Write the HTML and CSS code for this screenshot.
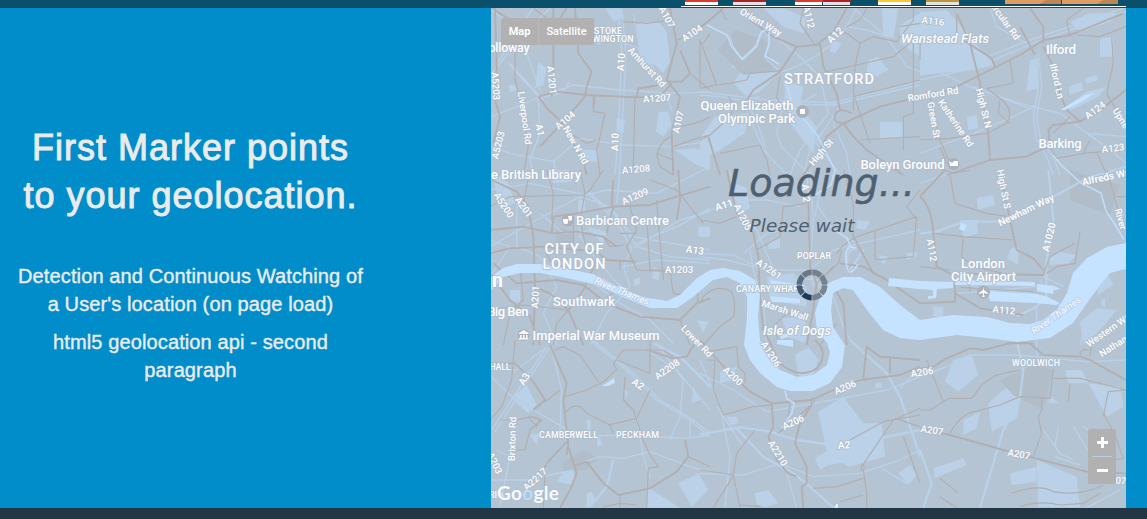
FILE: index.html
```html
<!DOCTYPE html>
<html lang="en">
<head>
<meta charset="utf-8">
<title>Geolocation</title>
<link rel="stylesheet" href="styles.css">
</head>
<body>
<header class="topbar">
  <div class="strip">
    <svg width="445" height="8" viewBox="681 0 445 8">
      <path fill="#db3a2c" d="M685 0h33v2h-33zM795 0h28v2h-28z"/>
      <path fill="#aa2023" d="M733 0h33v2h-33zM823 0h28v2h-28z"/>
      <path fill="#fff" d="M685 2h33v3h-33zM795 2h27v3h-27zM878 2h33v3h-33z"/>
      <path fill="#e1e3e6" d="M733 2h33v3h-33zM823 2h27v3h-27zM926 2h33v3h-33z"/>
      <path fill="#ffc72f" d="M878 0h33v2h-33z"/>
      <path fill="#b99739" d="M926 0h33v2h-33z"/>
      <path fill="#e49b62" d="M1005 0h56v4h-56zM1062 0h56v4h-56z"/>
      <path fill="#c18554" d="M1046 0h15v4h-21zM1103 0h15v4h-21z"/>
      <path fill="#fff" d="M681 6h445v1H681z"/>
    </svg>
  </div>
</header>
<main class="stage">
  <section class="intro">
    <h2 class="intro-title">First Marker points<br>to your geolocation.</h2>
    <p class="intro-text">Detection and Continuous Watching of<br>a User's location (on page load)</p>
    <p class="intro-text">html5 geolocation api - second<br>paragraph</p>
  </section>
  <section class="map">
    <svg class="map-canvas" width="635" height="500" viewBox="491 8 635 500">
      <!-- parks and open ground -->
      <g class="park">
        <g transform="translate(490 0) scale(.33333)">
          <path d="M345 25h45l12 25-30 15zM440 65l65 0 25 30 10 90-20 35-25-25-45-10zM300 120l35 0-5 15zM505 335l30 0 10 40-25 35-22-15zM555 450l60-5 45 15v50l-40-15zM145 185l25 20-10 50-25 10zM275 450h50v35h-40zM380 355l25 5-5 40-20-5zM55 255l20 0 5 15-20 8z"/>
        </g>
        <g transform="translate(700 0) scale(.33333)">
          <path d="M120 220l60 0 60-5-60 60-40 15-40-40zM45 350l100-10-10 60-90 60-45 15 0-60zM545 25h50l-15 90-30-10zM600 75l60-35v130l-60-40zM505 180l30-10 30 40-35 20-30-15zM540 365l70 0v50l-70 5zM190 25l60 0 70 30-10 45-60-20zM395 120l30 10-20 30-15-5zM250 240l60 20-10 60 50 60-10 80-70-90zM100 175l15 0 20 20-40 10z"/>
        </g>
        <g transform="translate(920 0) scale(.33333)">
          <path d="M0 35l80-5 80 90 60 75-60 15-160 15zM540 115l40-5v60h-40zM445 260l40-15 5 25-40 15zM495 235l35-10 5 15-35 12zM440 320l60-45 60-15-25 30-80 40zM140 350l30-5 5 40-30 5zM330 180l25-5v90l-35 10zM450 65l60-25 80 0-20 25-90 30z"/>
        </g>
        <g transform="translate(490 170) scale(.33333)">
          <path d="M5 0l50 40 20 60-45 15zM180 0l10 40 55-5-10-35zM265 90h20v40h-20zM625 170h35v30h-35zM490 290l20 10-5 30-20-5zM60 360h30v35h-30zM430 330l20-10v20l-15 10zM290 170l60 15-10 40zM620 450l35 5-15 35z"/>
        </g>
        <g transform="translate(700 170) scale(.33333)">
          <path d="M90 35l50 20 10 60-40 20zM205 220l35-15v30l-35 2zM200 320l80-10 40 40 0 60-110-20zM470 150l40 5-15 25-25-5zM245 445l60-5 20 30-10 50-50-20zM535 255l30 5-15 25zM620 250l30-5v15l-30 10z"/>
        </g>
        <g transform="translate(920 170) scale(.33333)">
          <path d="M120 150l50 0 5 40-45 15zM170 85l50-10 5 30-50 15zM385 265l35-20 50 10-25 25-55 5zM275 235h20v50l-35-20zM40 410h30v30h-30zM530 350l35-35 15 30-45 30zM555 385a10 10 0 1 0 1 25zM480 455l50-40 60 5-50 60-50 45z"/>
        </g>
        <g transform="translate(490 340) scale(.33333)">
          <path d="M75 165l35-30 30 60-25 25-35-30zM220 395l35-20-5 60-50-10zM290 460l15-5 15 30-30 20zM565 430l60-30 30 50-50 50zM470 440l100 63H470zM120 285l30-5-10 35zM400 150l15 5-5 20zM320 295l12 0 3 20-12 5zM610 140l20 40-25 10zM290 240l12 0v35l-10 0z"/>
        </g>
        <g transform="translate(700 340) scale(.33333)">
          <path d="M355 215l75-45 60 80 55 0 10 100-110 30-65-45zM345 355l50-30 40 10 10 30-60 10-25 15zM165 460l40-10 30 40-40 12-25-10zM80 230l30 0 5 20-25 5zM595 400l35-25 20 30-25 30zM285 45l40-25 30 40-20 55-40-10zM525 130l20-2v15l-18 2zM60 95l50-15-10 40-40 10z"/>
        </g>
        <g transform="translate(920 340) scale(.33333)">
          <path d="M100 60l55-15 20 60-60 50-40-30zM205 190l70-60 35 5-20 100-75 40zM130 240l50-25-10 50-40 20zM40 385l90-30 10 20-95 40zM350 360l120 50 10 92H355zM270 400l80-20 0 45-75 10zM435 90l50 0 20 40-60 0zM390 165l25 25-30 0zM505 130l95 10 10 60-50 30z"/>
        </g>
      </g>
      <!-- built-up patches -->
      <path class="patch" d="M735 30l30 10 8 30-30 5-25-25zM563 462l20-12 15 8-12 12-22 2zM556 228l18 3-3 18-15-4zM1000 380l35-15 18 5-10 40-30-15zM1070 170l50 15-10 30-40-15zM491 75l10 0v14h-10z"/>
      <!-- secondary light roads and railways -->
      <g class="light">
        <g transform="translate(490 0) scale(.33333)">
          <path d="M5 350L140 295 250 255 390 270 560 280 660 275M55 190L145 290 150 400 120 480 130 525M385 25L395 160 385 400 375 525M395 25L408 160 395 400 388 525M5 220L110 90 180 25M145 290Q230 290 235 245M5 440L60 460 190 485 270 415 400 435 540 440 660 425M400 130L450 145 520 250 545 330M60 190L160 300M110 160L150 270M20 190L100 80M190 480L200 525M450 145L430 40M560 450L620 490 660 480"/>
          <path d="M0 25L80 90 130 25"/>
        </g>
        <g transform="translate(700 0) scale(.33333)">
          <path d="M0 285L60 290 180 310 400 315 660 255M0 275L200 300 400 308 660 245M20 75L90 110 100 140 130 180 170 140 190 90 210 70M110 25L200 90 300 170 360 230 385 340 300 450 270 525M230 220Q370 180 440 80L470 25M460 25L560 110 620 200 660 215M150 350L190 450 260 525M420 320L330 450 310 525M400 370L440 460 450 525M180 290L140 300 180 390 200 460M270 330L350 430 420 525M265 250L230 400 245 440 330 525M440 80L500 90 560 110M350 280L270 330 290 380"/>
          <path d="M190 90L210 120 195 175 240 215"/>
        </g>
        <g transform="translate(920 0) scale(.33333)">
          <path d="M0 240L160 205 340 130 450 90 618 35M0 225L140 195 330 120 450 80 610 25M0 190L150 260 300 310 420 340 500 400 618 410M345 160L355 260 340 350 350 420 380 470 400 525M355 160L365 260 350 350 362 420 400 470 420 525M0 460L160 400 280 350 350 315M210 25L230 80 320 130M160 260L340 330M500 400L560 440 618 490"/>
        </g>
        <g transform="translate(490 170) scale(.33333)">
          <path d="M0 60L120 40 290 75 350 60 500 70 660 -10M0 230L140 150 270 80 360 110 430 200 660 240M290 60L390 150 440 230 540 260 660 270M290 65L380 155 425 235 400 290 420 350 350 430 300 525M430 225L560 170 660 115M430 235L570 150 660 125M80 100L80 230 150 260 200 350 160 430 200 525M0 210L60 230 0 320M380 100L390 0M400 290L500 270 660 280M150 130L220 190 330 180M550 520L480 450 390 400 310 340M270 80L270 200 330 280 400 360"/>
        </g>
        <g transform="translate(700 170) scale(.33333)">
          <path d="M0 250L100 255 160 285 250 300 330 300 400 240 480 220 660 180M0 260L80 270 160 290 260 320 350 330 400 380 430 470 460 525M320 0L330 150 325 270 340 350M330 0L340 150 332 270M0 130L130 90 200 90 300 110M90 0L110 120 170 180 230 320M150 240L160 300 190 400 200 525M350 100L400 180 470 220M360 60L345 140M130 250L200 190 300 170M320 300L400 400"/>
          <path class="wide" d="M470 235Q430 240 445 290M490 240Q470 270 450 300"/>
        </g>
        <g transform="translate(920 170) scale(.33333)">
          <path class="wide" d="M0 190L50 185 130 155 240 155 340 110 410 75 500 25 618 -10M385 0L400 150 380 270 378 380 350 410 290 440"/>
          <path d="M0 40L60 20 120 0M370 320L430 350M360 330L390 400 420 405M480 455L490 490 480 525M150 350L340 370M110 370L350 350M350 410V500"/>
        </g>
        <g transform="translate(490 340) scale(.33333)">
          <path d="M5 110L70 175 200 250 260 290 400 285 590 295 660 285M5 90L80 90 170 20M5 270L170 20M15 275L180 20M185 25L215 150 210 270M300 0L420 100 500 180 600 240 660 290M310 0L430 100 510 180 610 240 660 280M250 375L330 350 400 355 480 335 600 380 660 395M5 420L110 420 250 390M470 30L560 90 660 210M500 10L580 120 570 230 540 300M600 240V290M440 230L460 350 480 410M30 500L60 350 20 330"/>
          <path class="wide" d="M490 10L570 50 660 140M370 360L350 440 300 500"/>
        </g>
        <g transform="translate(700 340) scale(.33333)">
          <path class="wide" d="M0 283L120 262 210 275 290 300 400 315 540 295 660 270M110 265L190 350 280 400 330 440 400 503M450 0L560 100 600 170 640 290 660 350"/>
          <path d="M0 100L100 150 200 215 340 190 560 150 660 110M0 60L60 200 90 350 75 503M0 400L130 405 240 370 340 410 480 400 600 360 660 330M600 145L660 80M545 385L620 430M260 400L290 503M240 280L340 190M130 320L50 200"/>
        </g>
        <g transform="translate(920 340) scale(.33333)">
          <path class="wide" d="M290 0L310 90 300 170 250 270 220 370 180 503M0 330L35 430 10 503"/>
          <path d="M0 110L80 80 150 45 290 45 400 55 500 65 618 60M370 270L420 340 460 360M415 260L405 320M460 260L510 340M405 350L480 375M520 280L490 260M500 503L600 450M350 0V50"/>
        </g>
      </g>
      <!-- main roads -->
      <g class="road">
        <g transform="translate(490 0) scale(.33333)">
          <path class="major" d="M5 25L110 90 200 70 230 25M145 290L200 275 290 285 440 292 510 290 545 250M145 290L175 330 210 360 280 480 290 525M150 440L220 365 285 290 290 260 305 215 265 160 255 25M540 25L560 130 530 240 545 260 570 290 545 400 550 525M570 150L600 220 575 245 530 245M440 290L445 265 510 255M190 25V250L185 290M15 25L20 200 15 300 30 350 10 430"/>
          <path d="M400 65L470 70 545 60M565 120L660 60M600 220L660 270M75 130L75 240 100 330 115 440 100 525M315 290L310 335 345 340 330 410 320 450 330 525M435 290L430 500M240 400L290 430 320 420M575 380L630 365 660 350M550 440L620 415 660 405M130 25L200 75M500 470Q510 420 545 410M550 480L500 460 510 500 550 525M660 100L640 130M310 335V285"/>
        </g>
        <g transform="translate(700 0) scale(.33333)">
          <path class="major" d="M0 85L70 25M140 300L160 270 240 215 290 140 350 135 400 95 440 25M290 140L220 110 150 60M360 130L370 200 410 280 420 330M660 290L540 320 430 370 380 410 350 470 310 525M430 370L460 410 500 450 610 525M440 370Q395 370 405 345T455 340M25 410L60 525"/>
          <path d="M0 260L0 120 50 255 90 250 140 240 150 220 240 212M0 265L50 255M480 130L465 200 460 280 480 340 510 430M405 95L440 100 480 130 520 110 590 125 640 60 640 25M380 215L470 195 580 170 640 120V250L640 340 610 350V450M460 290L660 240M460 295V330M480 420L660 410M345 135L300 70 310 25M660 70L600 80M85 290L105 320 80 360 30 405M60 460L180 435 200 480 210 525M240 230L230 290 250 330M0 420L30 405M440 80L480 60 500 25M80 60L60 25"/>
        </g>
        <g transform="translate(920 0) scale(.33333)">
          <path class="major" d="M0 300L110 260 180 225 300 165 370 120 450 105 610 40M110 40L150 130 180 250 205 400 210 480M130 120L215 175 225 200M370 140L400 200 420 280 440 330 480 365 540 330 618 270M480 365L400 375 385 390 390 440 350 455 320 470 210 480 80 525M330 25L370 80 370 130M300 80L345 165"/>
          <path d="M0 130L0 180M110 50L110 130M30 290L60 420 90 490M0 420L90 415 200 400 260 370Q285 330 240 295L200 265 280 250 270 180M240 300L235 340 270 370M575 110L580 190 560 280 618 380M470 105L540 110 618 80M450 110L440 60 490 25M390 440L410 475 490 460 510 420M490 460L550 455 618 450M60 440L80 490M450 350L400 400M530 455L560 525"/>
        </g>
        <g transform="translate(490 170) scale(.33333)">
          <path class="major" d="M5 30L80 65 115 110 130 200 135 350 130 525M0 250L60 235 160 230 320 245 350 270 440 275M0 180L100 170 190 190 260 185 340 200 380 230M185 190L190 140 260 130 370 110 480 105 560 80 660 50M370 110L350 190M0 310L60 390 120 440 150 525M130 350L180 370 235 420 280 525M235 420L280 360 320 270M10 280L80 340 200 330 280 345 350 400 450 440 570 450 620 400 660 385M565 0L570 90 560 150M370 30L365 110"/>
          <path d="M0 110L60 80 280 75 300 60 340 0M270 0L285 70 270 150 290 240M120 0L100 100M170 0L190 70 185 150M420 110L440 180 410 230 440 300 540 305M470 140L480 300 540 300M500 90L510 210 520 330M540 305L550 370 600 380M640 160L560 60 480 30M250 130V245M0 420L100 405 235 420 200 460 190 525M160 230L200 310 280 320M90 290L100 390 60 430 40 525M390 190L440 190M620 330L625 400M570 450L600 525M350 380L400 350M390 270V300M340 200L360 230 400 225"/>
        </g>
        <g transform="translate(700 170) scale(.33333)">
          <path class="major" d="M80 0L110 130 160 190 175 260 180 380 190 480 215 525M325 80L330 290 350 340 340 420 320 525M340 300L400 350 430 400 440 525M420 280L490 290 560 330 660 400M460 200L520 310 555 325"/>
          <path d="M0 150L60 160 110 140M170 240L240 200 250 110 320 100M410 250Q430 220 470 200L530 180 650 140M350 340L415 280 425 240M430 0L460 100 460 200M525 180V270L640 260 650 140M660 60L620 110 650 150M0 400L10 380Q50 340 95 365 110 400 100 440L60 470 10 525M360 525L410 460M240 525L220 470 260 430 330 430M180 350L250 345M370 320L400 290"/>
        </g>
        <g transform="translate(920 170) scale(.33333)">
          <path class="major" d="M0 80L75 0M0 80Q35 110 40 190L50 290 90 310 370 315M240 0L270 150 290 240 340 265 370 300M105 330V395L0 400M105 370L180 415 310 435M260 520H340"/>
          <path d="M75 0L100 10 150 0M90 15L105 100 200 130 265 140M280 210L130 200 40 190M130 200L125 260 160 290 250 310M0 290L90 300M480 185L465 280 410 290 380 310M560 0L600 140 618 170M590 80H618M370 315L390 260 465 220M120 352L340 365M150 340V365"/>
        </g>
        <g transform="translate(490 340) scale(.33333)">
          <path class="major" d="M180 15L230 130 220 180 235 320 260 400 240 450 210 503M170 370L235 300 230 345M110 430L170 375M255 375L290 365 340 430 385 465 480 445 560 395 595 350 585 300M470 30L550 55 590 50 620 0M5 70L75 70 130 125 165 180 130 210"/>
          <path d="M75 0L65 120 35 200 0 240M195 30L220 20 270 45 280 60 325 125M225 170L290 150 340 125 380 90 370 70 400 30M380 60L480 100V0M400 30L520 30 550 50M225 220Q260 175 290 220L360 255 370 280M355 255L440 235 480 150M405 110L400 180 430 210 460 300 480 345 505 380 475 385 470 503M165 185L210 150M30 240L80 240 125 230 155 240 120 270 105 330 80 330M390 465V503M440 495L390 490 340 500M595 350L660 380M115 230L140 260 150 235M165 400L160 503"/>
        </g>
        <g transform="translate(700 340) scale(.33333)">
          <path class="major" d="M0 0L80 90 150 155 215 190 335 180 400 150 480 120 600 105 660 80M215 190L220 260 205 290 230 360 265 400 290 410M235 280L335 195 300 250 285 310 320 380 320 430 305 440 310 503M660 60L540 50 500 20 490 115M570 50L570 100M210 10L240 70Q300 120 350 85 390 40 345 0"/>
          <path d="M335 175a8 8 0 1 1-1 16zM485 375a8 8 0 1 1-1 16zM215 195L160 200 70 225 40 150 45 60 20 60M30 35L110 20 115 80 135 100 135 130M450 300L550 245 660 225M485 380L580 240 660 205M490 390L500 460M340 445L410 440 490 415M420 485L490 465M500 460V503M100 405L110 340 165 270M100 405L80 440 40 503M0 390L100 405 120 503M585 235L660 260M120 495L180 500M265 230L270 190M610 290L660 430"/>
        </g>
        <g transform="translate(920 340) scale(.33333)">
          <path class="major" d="M0 85L40 80 80 55 150 25 190 30 290 5 330 10 370 45 480 50 510 60 618 120M0 265L90 285 250 330 500 395 618 400"/>
          <path d="M20 60L70 185 30 210 0 210M70 185L90 175 155 175 190 130 230 105 300 90M90 280Q110 240 145 220L240 195 300 170 390 175 400 85M365 175V210L355 230 365 280 340 350M550 230L565 155 618 150M550 220L585 285 610 355 585 360M400 115L480 115 618 150M480 45Q480 25 505 30M60 415L115 460M60 470L110 503M275 460Q360 430 400 455 480 470 550 435M300 500Q360 480 420 495L490 490 540 460M515 0L510 50M450 130L445 185"/>
        </g>
      </g>
      <!-- River Thames, docks and small water -->
      <g class="water">
        <path d="M491 277L503 268 517 264 540 264 563 268 593 274 620 288 643 297 667 301 680 295 697 278 710 270 723 268 740 271 755 280 760 295 758 317 760 340 767 355 780 370 797 377 813 375 827 365 830 352 827 343 817 330 815 313 820 297 828 283 843 277 860 277 880 287 900 305 920 320 953 315 987 317 1010 323 1030 324 1043 320 1057 310 1067 293 1073 273 1087 258 1107 247 1126 243V269L1110 273 1100 285 1087 303 1073 323 1050 338 1017 342 987 338 957 335 920 340 900 338 883 330 867 310 853 290 843 288 833 293 831 310 833 327 845 345 842 367 830 383 813 391 790 391 777 387 760 373 750 360 744 345 747 317 747 297 740 283 727 277 713 280 693 297 677 308 650 308 623 297 597 285 567 278 540 273 520 273 503 277 497 285 491 290Z"/>
        <path d="M889 278l31 3 33 1v6l-16 1-1 9-8 1v-3h5v-6l-14-1-31-3zM955 280l80 2v4l-80-1zM987 291l50 3 11 3 12 6-4 2-20-2-46-2zM1037 284l17 2 7 3-7 1-1 4-16-3zM770 280l32 5 0 5-30-2zM770 296l30 3v4l-28-1zM777 340h16v7l-16-3zM780 335l15-4v4l-14 4zM602 386l12-8 1 5-7 3zM491 495l8-6 6 8zM961 223l6 2-3 6-5-2zM1060 110l25-15 10-2-12 8-18 9z"/>
        <path class="stream" d="M707 25l20 10 5 12 10 12 14-13 5-14 8-3 0 15-4 12 14 8M787 85l5 20 25 30 18 35-4 15-16 10M1053 155l8 10 20 18 20 10 5 18 10 15 8 14M856 248q-12-5-10 14t12 2M785 390l2 9 7 4-2 10-10 15M835 230l12 8 4 10"/>
      </g>
      <!-- point-of-interest markers -->
      <g class="pin">
        <circle cx="802.500" cy="111.500" r="6.500"/><circle cx="567.500" cy="220.500" r="6"/><circle cx="953.500" cy="164" r="6"/><circle cx="983.500" cy="292" r="6.500"/><circle cx="523.500" cy="335" r="6"/>
      </g>
      <g fill="#f7faff">
        <path d="M800 109h5v5h-5zM563 219h5v4q-3 3-5-1zM568 216h4v4l-3 1zM949 161l3 2 2-2 4 0v5h-8zM983 287l1 3 4 3v1l-4-1v2l1 2h-3l1-2v-2l-4 1v-1l4-3z"/>
        <path d="M519 333l4.500-3 5 3v1h-9.500zM520 335h1.500v3H520zM523 335h1.500v3H523zM526 335h1.500v3H526zM519 338h9v1.500h-9z"/>
      </g>
      <!-- place labels -->
      <g class="place">
        <text x="608" y="34" font-size="8.800" textLength="28">STOKE</text>
        <text x="613" y="42" font-size="8.800" textLength="41">WINGTON</text>
        <text x="509" y="51.500" font-size="12.500" textLength="41">olloway</text>
        <text x="829" y="84" font-size="14.500" textLength="90">STRATFORD</text>
        <text x="747" y="109.500" font-size="13" textLength="93">Queen Elizabeth</text>
        <text x="756.500" y="122.500" font-size="13" textLength="77">Olympic Park</text>
        <text x="902.500" y="168.500" font-size="13" textLength="84">Boleyn Ground</text>
        <text x="945" y="42.500" font-size="13" font-style="italic" textLength="88">Wanstead Flats</text>
        <text x="1061" y="54" font-size="13.500" textLength="30">Ilford</text>
        <text x="1060" y="148" font-size="13" textLength="43">Barking</text>
        <text x="536" y="179" font-size="13" textLength="90">e British Library</text>
        <text x="622.500" y="225" font-size="13" textLength="93">Barbican Centre</text>
        <text x="574" y="254" font-size="14.500" textLength="59">CITY OF</text>
        <text x="574" y="269" font-size="14.500" textLength="63">LONDON</text>
        <text x="497.500" y="287" font-size="19.500" style="font-weight:700">n</text>
        <text x="584" y="305.500" font-size="13" textLength="62">Southwark</text>
        <text x="508" y="316" font-size="13" textLength="41">Big Ben</text>
        <text x="596" y="340" font-size="13" textLength="127">Imperial War Museum</text>
        <text x="814" y="259" font-size="8.800" textLength="34">POPLAR</text>
        <text x="770" y="292" font-size="8.800" textLength="68">CANARY WHARF</text>
        <text x="797" y="335" font-size="13" font-style="italic" textLength="68">Isle of Dogs</text>
        <text x="983" y="267.500" font-size="13" textLength="44">London</text>
        <text x="983.500" y="281" font-size="13" textLength="65">City Airport</text>
        <text x="500" y="370" font-size="8.800" textLength="21">HALL</text>
        <text x="568.500" y="438" font-size="8.800" textLength="59">CAMBERWELL</text>
        <text x="637.500" y="438" font-size="8.800" textLength="43">PECKHAM</text>
        <text x="1036" y="366" font-size="8.800" textLength="48">WOOLWICH</text>
        <text x="493" y="498" font-size="8.800">RI</text>
      </g>
      <!-- road labels, rotated along their roads -->
      <g class="name">
        <text transform="translate(667 17) rotate(62)">A107</text>
        <text transform="translate(692 33) rotate(-33)">A104</text>
        <text transform="translate(621 62) rotate(-86)" class="b">A10</text>
        <text transform="translate(647 67) rotate(47)">Amhurst Rd</text>
        <text transform="translate(552 80) rotate(84)">A1201</text>
        <text transform="translate(496 86) rotate(86)">A5203</text>
        <text transform="translate(657 98) rotate(-4)">A1207</text>
        <text transform="translate(525 118) rotate(82)">Liverpool Rd</text>
        <text transform="translate(565 120) rotate(-40)">A104</text>
        <text transform="translate(540 130) rotate(80)" class="b">A1</text>
        <text transform="translate(576 145) rotate(61)">New N Rd</text>
        <text transform="translate(498 145) rotate(-76)">A5203</text>
        <text transform="translate(615 142) rotate(-88)" class="b">A10</text>
        <text transform="translate(678 122) rotate(-78)">A107</text>
        <text transform="translate(636 169) rotate(-5)">A1208</text>
        <text transform="translate(761 22) rotate(30)">Orient Way</text>
        <text transform="translate(809 17) rotate(77)">A112</text>
        <text transform="translate(835 35) rotate(-43)" class="b">A12</text>
        <text transform="translate(821 152) rotate(-50)">High St</text>
        <text transform="translate(933 21) rotate(7)">A116</text>
        <text transform="translate(1006 22) rotate(54)">ircular Rd</text>
        <text transform="translate(1057 81) rotate(77)">Ilford Ln</text>
        <text transform="translate(933 94) rotate(-9)">Romford Rd</text>
        <text transform="translate(984 108) rotate(76)">High St N</text>
        <text transform="translate(934 120) rotate(80)">Green St</text>
        <text transform="translate(956 123) rotate(56)">Katherine Rd</text>
        <text transform="translate(1095 110) rotate(-36)">A124</text>
        <text transform="translate(1121 118) rotate(58)">Upne</text>
        <text transform="translate(1113 148) rotate(-6)">A123</text>
        <text transform="translate(504 205) rotate(57)">A5200</text>
        <text transform="translate(524 207) rotate(55)">A201</text>
        <text transform="translate(635 196) rotate(-24)">A1209</text>
        <text transform="translate(695 250) rotate(8)" class="b">A13</text>
        <text transform="translate(679 269)">A1203</text>
        <text transform="translate(535 297) rotate(-87)">A201</text>
        <text transform="translate(622 291) rotate(22)" class="r">River Thames</text>
        <text transform="translate(724 205) rotate(-17)" class="b">A11</text>
        <text transform="translate(743 217) rotate(64)">A1205</text>
        <text transform="translate(806 193) rotate(84)" class="b">A12</text>
        <text transform="translate(769 269) rotate(34)">A1261</text>
        <text transform="translate(785 310) rotate(18)">Marsh Wall</text>
        <text transform="translate(1004 189) rotate(79)">High St S</text>
        <text transform="translate(1026 210) rotate(-26)" class="b">Newham Way</text>
        <text transform="translate(1049 237) rotate(-76)" class="b">A1020</text>
        <text transform="translate(932 250) rotate(80)">A112</text>
        <text transform="translate(1106 177) rotate(-12)" class="b">Alfreds Wa</text>
        <text transform="translate(1121 219) rotate(75)">River</text>
        <text transform="translate(1004 310) rotate(6)">A112</text>
        <text transform="translate(1056 315) rotate(-35)" class="r">River Thames</text>
        <text transform="translate(1108 330) rotate(-35)">Western Wa</text>
        <text transform="translate(1113 346) rotate(-32)">Nathan</text>
        <text transform="translate(697 341) rotate(46)">Lower Rd</text>
        <text transform="translate(524 379) rotate(-58)" class="b">A3</text>
        <text transform="translate(638 384) rotate(35)" class="b">A2</text>
        <text transform="translate(667 369) rotate(-35)">A2208</text>
        <text transform="translate(733 376) rotate(43)">A200</text>
        <text transform="translate(771 354) rotate(57)">A1206</text>
        <text transform="translate(845 387) rotate(-23)">A206</text>
        <text transform="translate(922 372) rotate(-9)">A206</text>
        <text transform="translate(793 422) rotate(-25)">A206</text>
        <text transform="translate(844 445) rotate(-3)" class="b">A2</text>
        <text transform="translate(778 453) rotate(58)">A2210</text>
        <text transform="translate(512 439) rotate(-88)">Brixton Rd</text>
        <text transform="translate(495 463) rotate(65)">A203</text>
        <text transform="translate(535 479) rotate(-42)">A2217</text>
        <text transform="translate(932 430) rotate(9)">A207</text>
        <text transform="translate(1019 454) rotate(10)">A207</text>
        <text transform="translate(1115 480) rotate(5)">A207</text>
        <text transform="translate(836 507)">4</text>
      </g>
      <text class="logo" x="497" y="500" textLength="62">Go<tspan fill="#bfdcf8">o</tspan>gle</text>
    </svg>

    <div class="map-type"><span class="type-item active">Map</span><span class="type-item">Satellite</span></div>
    <div class="zoom">
      <svg width="28" height="55" viewBox="0 0 28 55">
        <path fill="#fff" d="M9 12h4V8h3v4h4v3h-4v4h-3v-4H9zM9 40h11v3H9z"/>
        <path fill="#b9cfe5" d="M4 27h20v1H4z"/>
      </svg>
    </div>
    <div class="loading">
      <div class="loading-title">Loading...</div>
      <div class="loading-text">Please wait</div>
    </div>
    <svg class="spinner" width="32" height="32" viewBox="-16 -16 32 32">
      <g fill="none" stroke="#74818e" stroke-width="5.500">
        <path d="M.4-12.700A12.700 12.700 0 0 1 8.700-9.300"/>
        <path d="M9.300-8.700A12.700 12.700 0 0 1 12.700-.4"/>
        <path stroke="#788490" d="M12.700.4A12.700 12.700 0 0 1 9.300 8.700"/>
        <path d="M8.700 9.300A12.700 12.700 0 0 1 .4 12.700"/>
        <path stroke="#1e3a53" d="M-.4 12.700A12.700 12.700 0 0 1-8.700 9.300"/>
        <path stroke="#44596d" d="M-9.300 8.700A12.700 12.700 0 0 1-12.700.4"/>
        <path stroke="#5c6d7f" d="M-12.700-.4A12.700 12.700 0 0 1-9.300-8.700"/>
        <path stroke="#6b7987" d="M-8.700-9.300A12.700 12.700 0 0 1-.4-12.700"/>
      </g>
    </svg>
  </section>
</main>
<footer class="footer"></footer>
</body>
</html>
```
FILE: styles.css
```css
body {
  margin: 0;
  height: 519px;
  overflow: hidden;
  display: flex;
  flex-direction: column;
  background: #008dc9;
  font-family: "Liberation Sans", Arial, sans-serif;
}
.topbar {
  height: 8px;
  background: #0b506b;
  display: flex;
  justify-content: flex-end;
}
.strip { margin-right: 21px; height: 8px; }
.strip svg { display: block; }
.stage {
  height: 500px;
  display: flex;
  justify-content: space-between;
  padding-right: 21px;
}
.intro {
  width: 381px;
  padding-top: 116px;
  text-align: center;
  color: #ebebeb;
  white-space: nowrap;
}
.intro-title {
  margin: 0 0 42px;
  font-size: 36px;
  line-height: 48px;
  font-weight: 400;
  letter-spacing: 1px;
  -webkit-text-stroke: 1px #ebebeb;
}
.intro-text {
  margin: 0 0 10px;
  font-size: 20px;
  line-height: 28px;
  letter-spacing: 0.12px;
  -webkit-text-stroke: 0.4px #ebebeb;
}
.map {
  position: relative;
  width: 635px;
  height: 500px;
  background: #b5c4d2;
  overflow: hidden;
}
.map-canvas { display: block; font-family: Roboto, sans-serif; }
.park { fill: #bad1e8; }
.patch { fill: #b1bdc9; }
.light path { fill: none; stroke: #b9d1e9; stroke-width: 4; stroke-linejoin: round; }
.light .wide { stroke-width: 7; }
.road path { fill: none; stroke: #b1afb1; stroke-width: 3.5; stroke-linejoin: round; }
.road .major { stroke-width: 5.5; }
.water { fill: #c5e3ff; }
.water .stream { fill: none; stroke: #c1ddf8; stroke-width: 1.6; }
.pin { fill: #adb1b7; }
.place text, .name text {
  fill: #fdfeff;
  stroke: #aebdce;
  stroke-width: 1.6;
  paint-order: stroke;
  text-anchor: middle;
}
.place text { font-weight: 500; }
.name text { font-size: 9.6px; font-weight: 500; dominant-baseline: central; }
.name .b { font-size: 10px; font-weight: 600; }
.name .r { fill: #f3f4ff; stroke: #b3d0ee; font-size: 9.8px; font-style: italic; }
.logo {
  font: 700 19px Lato, sans-serif;
  fill: #f8fbff;
  stroke: #aebdce;
  stroke-width: 1;
  paint-order: stroke;
}
.map-type {
  position: absolute;
  left: 10px;
  top: 10px;
  height: 27px;
  display: flex;
  align-items: center;
  background: #b1b1b1;
  border-radius: 2px;
  color: #fff;
  font: 500 11px/27px Roboto, sans-serif;
}
.type-item { width: 55px; text-align: center; }
.type-item.active { width: 37px; font-weight: 700; border-right: 1px solid #bababa; }
.zoom {
  position: absolute;
  right: 10px;
  top: 421px;
  width: 28px;
  height: 55px;
  background: #b1b1b1;
  border-radius: 2px;
}
.loading {
  position: absolute;
  left: 181px;
  top: 150px;
  width: 260px;
  text-align: center;
  color: #4f6070;
  font-family: "DejaVu Sans", Verdana, sans-serif;
  font-style: italic;
}
.loading-title {
  padding-left: 39px;
  font-size: 38px;
  line-height: 50px;
  -webkit-text-stroke: 0.5px #4f6070;
}
.loading-text { font-size: 18.5px; line-height: 24px; margin-top: 6px; }
.spinner { position: absolute; left: 304.5px; top: 260.5px; }
.footer { height: 11px; background: #233646; }
```
